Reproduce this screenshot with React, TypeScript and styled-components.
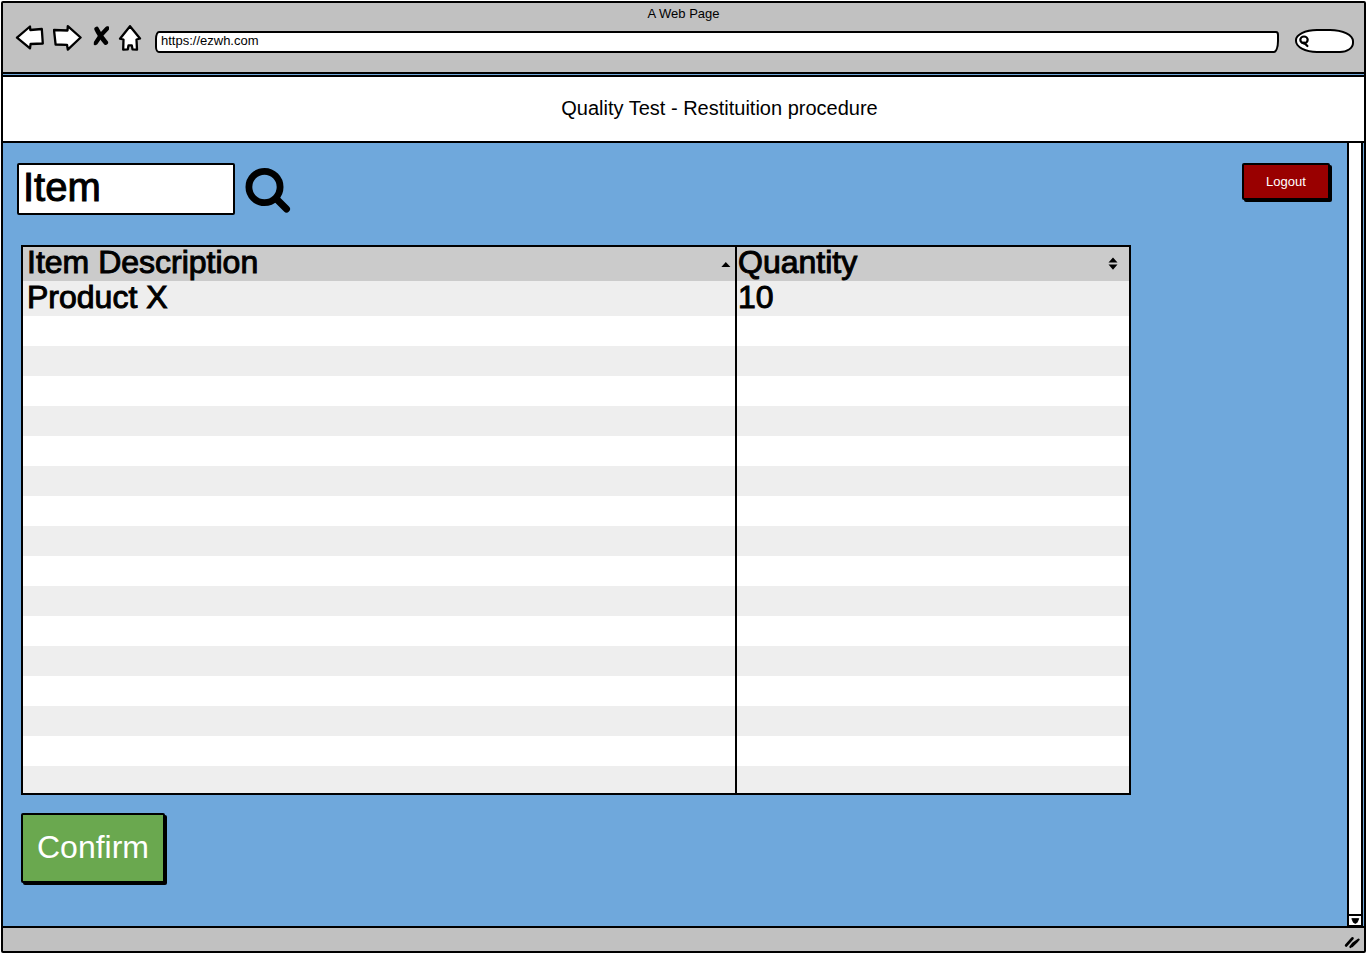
import React from "react";
import styled, { createGlobalStyle, css } from "styled-components";

const INK = "#000";
const CHROME = "#c1c1c1";
const SKY = "#6fa8dc";

const GlobalStyle = createGlobalStyle`
  *, *::before, *::after { box-sizing: border-box; }
  body {
    margin: 0;
    background: #fff;
    color: ${INK};
    font-family: "Liberation Sans", Arial, sans-serif;
  }
  button, input { font: inherit; color: inherit; }
`;

const inked = css`
  -webkit-text-stroke: 1px currentColor;
  stroke-linejoin: round;
`;

const Page = styled.div`
  display: flex;
  min-height: 100vh;
  padding: 1px 1px 2px;
`;

const BrowserWindow = styled.div`
  flex: 1;
  display: flex;
  flex-direction: column;
  border: 2px solid ${INK};
  border-radius: 2px;
  background: ${SKY};
`;

const Chrome = styled.header`
  display: flex;
  flex-direction: column;
  padding-bottom: 19px;
  margin-bottom: 1px;
  background: ${CHROME};
  border-bottom: 2px solid ${INK};
`;

const WindowTitle = styled.div`
  line-height: 22px;
  font-size: 13px;
  text-align: center;
`;

const Toolbar = styled.div`
  display: flex;
  align-items: flex-end;
  gap: 12px;
  padding: 0 10px 0 12px;
`;

const NavButtons = styled.nav`
  display: flex;
  gap: 8px;
`;

const IconButton = styled.button`
  display: block;
  padding: 0;
  border: 0;
  background: none;
  cursor: pointer;

  svg { display: block; }
`;

const AddressBar = styled.input`
  flex: 1;
  min-width: 0;
  height: 22px;
  padding: 0 4px 3px;
  border: 2px solid ${INK};
  border-radius: 4px 3px 5px 4px / 8px 4px 12px 6px;
  background: #fff;
  font-size: 13px;
`;

const SearchPill = styled.label`
  display: flex;
  align-items: center;
  width: 59px;
  height: 24px;
  margin-left: 4px;
  padding-left: 1px;
  border: 2px solid ${INK};
  border-radius: 22px 24px 14px 22px / 11px 12px 10px 12px;
  background: #fff;
`;

const PillInput = styled.input`
  flex: 1;
  min-width: 0;
  height: 16px;
  padding: 0 2px;
  border: 0;
  outline: 0;
  background: transparent;
  font-size: 13px;
`;

const Banner = styled.div`
  display: flex;
  align-items: center;
  justify-content: center;
  height: 68px;
  margin: 0 -2px;
  padding: 0 0 2px 72px;
  border: 2px solid ${INK};
  background: #fff;
`;

const BannerTitle = styled.h1`
  margin: 0;
  flex: 1;
  text-align: center;
  font-size: 20px;
  line-height: 24px;
  font-weight: 400;
`;

const Viewport = styled.div`
  flex: 1;
  display: flex;
  padding-right: 1px;
`;

const Content = styled.main`
  flex: 1;
  min-width: 0;
  display: flex;
  flex-direction: column;
  align-items: stretch;
  padding: 20px 17px 43px 14px;
`;

const TopRow = styled.div`
  display: flex;
  align-items: flex-start;
  gap: 10px;
  margin-bottom: 30px;
`;

const ItemInput = styled.input`
  width: 218px;
  height: 52px;
  padding: 0 4px 4px;
  border: 2px solid ${INK};
  border-radius: 2px;
  background: #fff;
  font-size: 40px;
  ${inked}
`;

const SketchButton = styled.button<{ $tone: string; $large?: boolean }>`
  width: ${(p) => (p.$large ? 144 : 88)}px;
  height: ${(p) => (p.$large ? 70 : 37)}px;
  padding: 0 0 1px;
  border: 2px solid ${INK};
  border-radius: 2px;
  background: ${(p) => p.$tone};
  box-shadow: 2px 2px 0 ${INK};
  color: #fff;
  font-size: ${(p) => (p.$large ? 32 : 13)}px;
  cursor: pointer;
`;

const Spacer = styled.div`
  flex: 1;
`;

const Sheet = styled.section`
  display: flex;
  flex-direction: column;
  align-items: flex-start;
  gap: 18px;
  padding: 0 199px 0 4px;
`;

const Table = styled.table`
  width: 100%;
  table-layout: fixed;
  border: 2px solid ${INK};
  border-spacing: 0;
  background: #fff;

  tr > *:first-child { border-right: 2px solid ${INK}; }
`;

const HeadCell = styled.th<{ $first?: boolean }>`
  width: ${(p) => (p.$first ? "auto" : "392px")};
  height: 34px;
  padding: ${(p) => (p.$first ? "0 4px" : "0 11px 0 1px")};
  background: #cbcbcb;
  font-size: 32px;
  line-height: 30px;
  font-weight: 400;
  text-align: left;
  vertical-align: top;
  ${inked}
`;

const HeadInner = styled.div`
  display: flex;
  align-items: center;
  justify-content: space-between;
`;

const Row = styled.tr`
  &:nth-child(odd) { background: #eee; }
`;

const Cell = styled.td<{ $height: number; $first?: boolean }>`
  height: ${(p) => p.$height}px;
  padding: ${(p) => (p.$first ? "0 4px" : "0 1px")};
  font-size: 32px;
  line-height: 32px;
  vertical-align: top;
  ${inked}
`;

const ScrollTrack = styled.div`
  display: flex;
  flex-direction: column;
  justify-content: flex-end;
  width: 16px;
  border: solid ${INK};
  border-width: 0 2px;
  background: #fff;
`;

const ScrollDown = styled(IconButton)`
  width: 12px;
  height: 12px;
  border-top: 2px solid ${INK};
`;

const StatusBar = styled.footer`
  display: flex;
  align-items: center;
  justify-content: flex-end;
  height: 25px;
  padding: 4px 1px 0 0;
  border-top: 2px solid ${INK};
  background: ${CHROME};
`;

const outline = {
  fill: "#fff",
  stroke: INK,
  strokeWidth: 2.3,
  strokeLinejoin: "round" as const,
  strokeLinecap: "round" as const,
};

const BackIcon = () => (
  <svg width="30" height="28" {...outline}>
    <path d="M2 12.6 L15 1.5 L15.3 5 L26.8 4 L27.8 18.5 L15.6 19 L15 23.3 Z" />
  </svg>
);

const ForwardIcon = () => (
  <svg width="30" height="28" {...outline}>
    <path d="M1 5 L14.5 5.5 L14.8 1.2 L27.6 12.5 L14.8 24.6 L14 19.8 L2.6 19.5 Z" />
  </svg>
);

const StopIcon = () => (
  <svg width="18" height="28" fill="none" stroke={INK} strokeLinecap="round">
    <path d="M5.6 4 Q8.5 10.5 14.8 17.6" strokeWidth="4.6" />
    <path d="M16 3.6 Q9.5 9.5 5 17.6" strokeWidth="4.2" />
    <path d="M17 2.6 L14 5.4 M4 19 L6 16" strokeWidth="2.6" />
  </svg>
);

const HomeIcon = () => (
  <svg width="26" height="28" {...outline}>
    <path d="M13 1.2 L23 13.5 L19.5 14.5 L20 24.6 L15.5 24.3 L14.8 20.4 L11.5 20.4 L10.8 24.3 L6.2 24.6 L6.5 14.5 L3 13.7 Z" />
  </svg>
);

const SmallSearchIcon = () => (
  <svg width="12" height="14" fill="none" stroke={INK} strokeLinecap="round">
    <ellipse cx="6" cy="5.8" rx="3.7" ry="3.3" strokeWidth="2.2" />
    <path d="M6 8.6 L9.4 12 M4.4 8.8 L7.4 10" strokeWidth="2.2" />
  </svg>
);

const SearchIcon = () => (
  <svg width="46" height="52" fill="none" stroke={INK} strokeLinecap="round">
    <circle cx="19.5" cy="24" r="15.6" strokeWidth="6.8" />
    <path d="M32 36.5 L41.5 46" strokeWidth="7" />
  </svg>
);

const SortUpIcon = () => (
  <svg width="10" height="12" fill={INK}>
    <path d="M0.4 11 L4.8 6 L9.4 11 Z" />
  </svg>
);

const SortBothIcon = () => (
  <svg width="10" height="16" fill={INK}>
    <path d="M0.5 8.6 L5 3.4 L9.5 8.6 Z M0.5 10.6 L9.5 10.6 L5 15.8 Z" />
  </svg>
);

const ChevronDown = () => (
  <svg width="12" height="10">
    <path d="M2.8 2.6 L9.8 2.6 L8.2 6.4 L6.3 7.4 L4.4 6.4 Z" fill={INK} stroke={INK} strokeWidth="0.8" />
    <path d="M0 9.5 H12" stroke={INK} />
  </svg>
);

const ResizeGrip = () => (
  <svg width="19" height="16" fill="none" stroke={INK} strokeLinecap="round">
    <path d="M2.2 11.4 L8.4 4.4" strokeWidth="2.8" />
    <path d="M6.4 13 L9 9.6 L14.6 5.6 M8 12.2 L13.4 7" strokeWidth="2.2" />
  </svg>
);

const items = [{ description: "Product X", quantity: 10 }];
const emptyRows = Array.from({ length: 16 }, (_, i) => (i === 15 ? 27 : 30));

export default function App() {
  return (
    <>
      <GlobalStyle />
      <Page>
        <BrowserWindow>
          <Chrome>
            <WindowTitle>A Web Page</WindowTitle>
            <Toolbar>
              <NavButtons>
                <IconButton aria-label="Back"><BackIcon /></IconButton>
                <IconButton aria-label="Forward"><ForwardIcon /></IconButton>
                <IconButton aria-label="Stop"><StopIcon /></IconButton>
                <IconButton aria-label="Home"><HomeIcon /></IconButton>
              </NavButtons>
              <AddressBar aria-label="Address" defaultValue="https://ezwh.com" />
              <SearchPill>
                <SmallSearchIcon />
                <PillInput aria-label="Search the web" />
              </SearchPill>
            </Toolbar>
          </Chrome>

          <Banner>
            <BannerTitle>Quality Test - Restituition procedure</BannerTitle>
          </Banner>

          <Viewport>
            <Content>
              <TopRow>
                <ItemInput aria-label="Item" defaultValue="Item" />
                <IconButton aria-label="Search"><SearchIcon /></IconButton>
                <Spacer />
                <SketchButton $tone="#990000">Logout</SketchButton>
              </TopRow>

              <Sheet>
                <Table>
                  <thead>
                    <tr>
                      <HeadCell $first scope="col">
                        <HeadInner>Item Description<SortUpIcon /></HeadInner>
                      </HeadCell>
                      <HeadCell scope="col">
                        <HeadInner>Quantity<SortBothIcon /></HeadInner>
                      </HeadCell>
                    </tr>
                  </thead>
                  <tbody>
                    {items.map((item) => (
                      <Row key={item.description}>
                        <Cell $height={35} $first>{item.description}</Cell>
                        <Cell $height={35}>{item.quantity}</Cell>
                      </Row>
                    ))}
                    {emptyRows.map((height, i) => (
                      <Row key={i}>
                        <Cell $height={height} $first />
                        <Cell $height={height} />
                      </Row>
                    ))}
                  </tbody>
                </Table>
                <SketchButton $tone="#6aa84f" $large>Confirm</SketchButton>
              </Sheet>
            </Content>

            <ScrollTrack>
              <ScrollDown aria-label="Scroll down"><ChevronDown /></ScrollDown>
            </ScrollTrack>
          </Viewport>

          <StatusBar><ResizeGrip /></StatusBar>
        </BrowserWindow>
      </Page>
    </>
  );
}
